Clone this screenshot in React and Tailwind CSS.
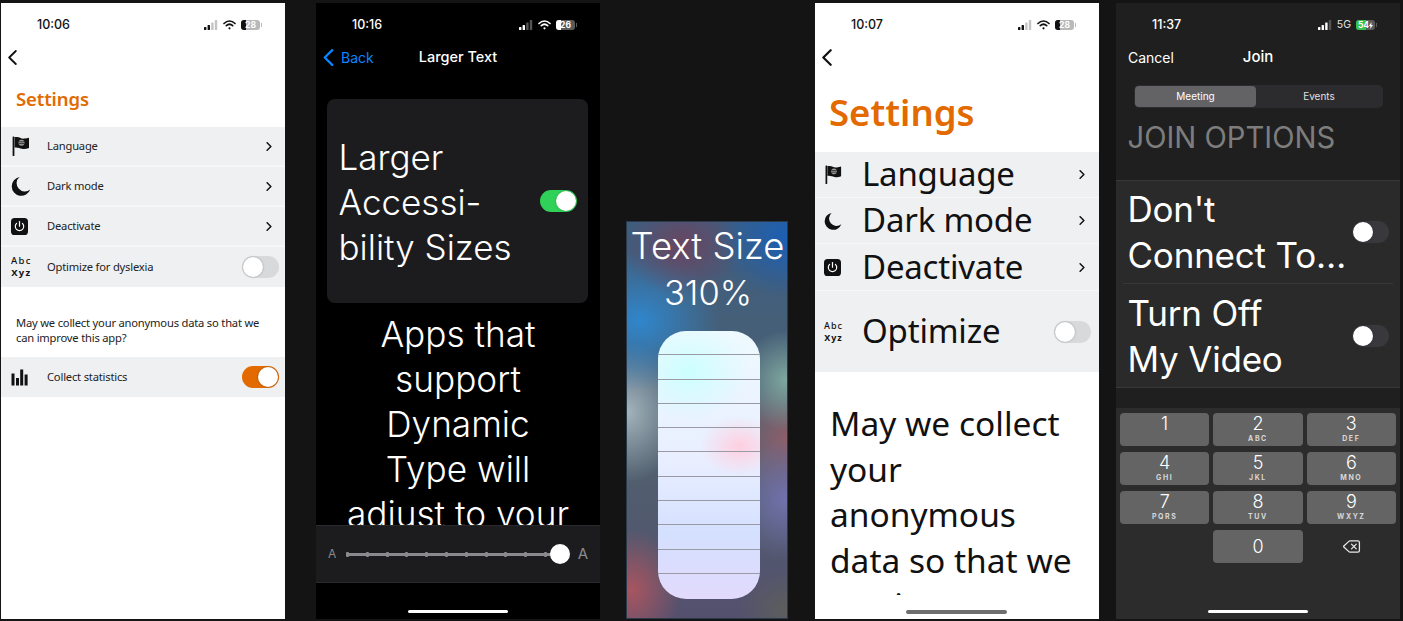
import React from 'react';
import { Delete } from 'lucide-react';

const UI = 'font-["Inter",sans-serif]';
const APP = 'font-["Noto_Sans",sans-serif]';

function StatusBar({ time, battery, dark, cellular }) {
  const on = dark ? '#ffffff' : '#111111';
  const off = dark ? '#555555' : '#c4c4c6';
  return (
    <div className={`h-[42px] shrink-0 flex items-center pl-[36px] pr-[23px] pt-[2px] ${UI} ${dark ? 'text-white' : 'text-[#111]'}`}>
      <span className="text-[12.5px] font-medium w-[40px]">{time}</span>
      <div className="ml-auto flex items-center">
        <svg width="14" height="10" viewBox="0 0 14 10">
          <rect x="0" y="7" width="2.4" height="3" rx="0.5" fill={on} />
          <rect x="3.6" y="5" width="2.4" height="5" rx="0.5" fill={on} />
          <rect x="7.2" y="2.5" width="2.4" height="7.5" rx="0.5" fill={cellular ? on : off} />
          <rect x="10.8" y="0" width="2.4" height="10" rx="0.5" fill={off} />
        </svg>
        {cellular ? (
          <span className="text-[10.5px] ml-[5px] mr-[5px] text-[#e4e4e4]">5G</span>
        ) : (
          <svg className="ml-[5px] mr-[5px]" width="13" height="10" viewBox="0 0 13 10" fill="none" stroke={on} strokeLinecap="round">
            <path d="M1 3.5C4.3.4 8.7.4 12 3.5" strokeWidth="1.7" />
            <path d="M3.3 5.7c2-1.8 4.4-1.8 6.4 0" strokeWidth="1.7" />
            <circle cx="6.5" cy="8.3" r="1.1" fill={on} stroke="none" />
          </svg>
        )}
        <Battery level={battery} dark={dark} cellular={cellular} />
      </div>
    </div>
  );
}

function Battery({ level, dark, cellular }) {
  const fill = cellular ? 'bg-[#32c24d]' : dark ? 'bg-white' : 'bg-[#111]';
  const w = cellular ? 'w-[54%]' : 'w-[28%]';
  return (
    <div className="flex items-center">
      <div className={`relative w-[19px] h-[10px] rounded-[3px] overflow-hidden ${dark ? 'bg-[#5a5a5a]' : 'bg-[#b9b9bb]'}`}>
        <div className={`h-full ${w} ${fill}`} />
        <span className="absolute inset-0 flex items-center justify-center text-[8.5px] leading-none font-bold text-white">
          {level}
          {cellular && (
            <svg width="4" height="7" viewBox="0 0 4 7" fill="#ffffff">
              <path d="M2.4 0L0 3.9h1.5L1.1 7 4 2.9H2.3z" />
            </svg>
          )}
        </span>
      </div>
      <div className={`w-[1px] h-[4px] ml-[1px] ${dark ? 'bg-[#5a5a5a]' : 'bg-[#b9b9bb]'}`} />
    </div>
  );
}

function Toggle({ on, track, className = '' }) {
  return (
    <div className={`w-[37px] h-[22px] rounded-full p-[1px] flex shrink-0 ${track} ${on ? 'justify-end' : 'justify-start'} ${className}`}>
      <div className="w-[20px] h-[20px] rounded-full bg-white shadow-[0_0_2px_rgba(0,0,0,0.35)]" />
    </div>
  );
}

function Chevron({ size = 6, height = 9, color = '#111', width = 2 }) {
  return (
    <svg width={size} height={height} viewBox="0 0 8 12" fill="none" stroke={color} strokeWidth={width} strokeLinecap="round" strokeLinejoin="round">
      <path d="M1.5 1L6.5 6L1.5 11" />
    </svg>
  );
}

function BackChevron({ color = '#111', w = 9, h = 15, sw = 1.8 }) {
  return (
    <svg width={w} height={h} viewBox="0 0 9 15" fill="none" stroke={color} strokeWidth={sw} strokeLinecap="round" strokeLinejoin="round">
      <path d="M7.8 1L1.2 7.5L7.8 14" />
    </svg>
  );
}

function FlagIcon({ size = 20 }) {
  return (
    <svg width={size} height={size} viewBox="0 0 20 20">
      <rect x="1.6" y="0.5" width="1.8" height="19.5" rx="0.6" fill="#111" />
      <path d="M1 1h5c3 0 4 2.2 7.5 1.6 1.7-.3 3.2-.6 4.5-.9v10.2c-2.4.9-4.6 1.3-7 .8-2.4-.5-4-1.5-7.4-1.2V1z" fill="#111" />
      <circle cx="10.5" cy="6.7" r="3" fill="#9c9c9c" />
      <path d="M7.6 5.8h5.8M7.6 7.6h5.8" stroke="#111" strokeWidth="0.7" />
    </svg>
  );
}

function MoonIcon({ size = 20 }) {
  return (
    <svg width={size} height={size} viewBox="0 0 20 20">
      <path d="M8.5 1A9.5 9.5 0 1 0 19.2 13.5A7.6 7.6 0 0 1 8.5 1z" fill="#111" />
    </svg>
  );
}

function PowerIcon({ size = 17 }) {
  return (
    <svg width={size} height={size} viewBox="0 0 17 17" fill="none">
      <rect width="17" height="17" rx="3.6" fill="#111" />
      <path d="M5.6 5.4a4.2 4.2 0 1 0 5.8 0" stroke="#fff" strokeWidth="1.2" strokeLinecap="round" />
      <path d="M8.5 3.6v4.6" stroke="#fff" strokeWidth="1.2" strokeLinecap="round" />
    </svg>
  );
}

function BarsIcon() {
  return (
    <svg width="17" height="17" viewBox="0 0 17 17" fill="#111">
      <rect x="0.5" y="4.5" width="3" height="12" />
      <rect x="5" y="9" width="3" height="7.5" />
      <rect x="9.2" y="0.5" width="3" height="16" />
      <rect x="13.6" y="5.5" width="3" height="11" />
    </svg>
  );
}

function AbcIcon({ small }) {
  return (
    <div className={`${APP} text-[#111] text-center leading-[12px] ${small ? 'text-[9px] tracking-[1px]' : 'text-[9.5px] tracking-[1.3px]'}`}>
      <div className="font-medium">Abc</div>
      <div className="font-bold">Xyz</div>
    </div>
  );
}

const smallRows = [
  { label: 'Language', icon: <FlagIcon /> },
  { label: 'Dark mode', icon: <MoonIcon /> },
  { label: 'Deactivate', icon: <PowerIcon /> },
];

function SmallRow({ icon, label, right, h = 'h-[38px]' }) {
  return (
    <div className={`${h} bg-[#eff0f2] flex items-center pr-[6px]`}>
      <div className="w-[46px] pl-[10px] flex items-center">{icon}</div>
      <span className="text-[11.2px] tracking-[-0.2px] text-[#222]">{label}</span>
      <div className="ml-auto flex items-center">{right}</div>
    </div>
  );
}

function PhoneOne() {
  return (
    <div className={`w-[284px] ml-[1px] bg-white shrink-0 flex flex-col overflow-hidden ${APP}`}>
      <StatusBar time="10:06" battery="28" />
      <div className="h-[24px] pl-[7px] flex items-center shrink-0">
        <BackChevron />
      </div>
      <div className="mt-[17px] mb-[15px] h-[26px] pl-[15px] text-[18.5px] tracking-[-0.1px] leading-[26px] font-semibold text-[#e26a00]">Settings</div>
      <div className="flex flex-col gap-[2px] bg-[#f7f7f8]">
        {smallRows.map((r) => (
          <SmallRow key={r.label} icon={r.icon} label={r.label} right={<div className="pr-[7px] flex"><Chevron /></div>} />
        ))}
        <SmallRow h="h-[40px]" icon={<AbcIcon />} label="Optimize for dyslexia" right={<Toggle track="bg-[#d8d9db]" />} />
      </div>
      <p className="mt-[29px] px-[15px] text-[11.2px] tracking-[-0.2px] leading-[14.5px] text-[#222]">
        May we collect your anonymous data so that we can improve this app?
      </p>
      <div className="mt-[12px]">
        <SmallRow h="h-[40px]" icon={<BarsIcon />} label="Collect statistics" right={<Toggle on track="bg-[#e26a00]" />} />
      </div>
    </div>
  );
}

function SliderBar() {
  const ticks = Array.from({ length: 11 }, (_, i) => i);
  return (
    <div className="absolute left-0 right-0 top-[522px] h-[58px] bg-[#1c1c1e] border-y border-[#2a2a2c] flex items-center pl-[12px] pr-[12px]">
      <span className="text-[12px] text-[#8a8a8e] w-[18px]">A</span>
      <div className="relative flex-1 h-[20px] flex items-center">
        <div className="w-full h-[3px] bg-[#8a8a8e] flex items-center">
          <div className="w-[201px] flex justify-between items-center">
            {ticks.map((t) => (
              <div key={t} className="w-[3px] h-[5px] rounded-[1px] bg-[#8a8a8e]" />
            ))}
          </div>
        </div>
        <div className="absolute right-[-10px] top-0 w-[20px] h-[20px] rounded-full bg-white" />
      </div>
      <span className="text-[15px] text-[#8a8a8e] ml-[18px]">A</span>
    </div>
  );
}

function PhoneTwo() {
  return (
    <div className={`relative w-[284px] ml-[31px] bg-black shrink-0 flex flex-col overflow-hidden text-white ${UI}`}>
      <StatusBar time="10:16" battery="26" dark />
      <div className="relative h-[24px] flex items-center justify-center shrink-0">
        <div className="absolute left-[7px] flex items-center gap-[7px] text-[#0a84ff] text-[14px]">
          <BackChevron color="#0a84ff" w={11} h={17} sw={2} />
          <span>Back</span>
        </div>
        <span className="text-[14.5px] font-medium">Larger Text</span>
      </div>
      <div className="ml-[11px] mr-[12px] mt-[30px] h-[204px] shrink-0 bg-[#1c1c1e] rounded-[8px] flex items-center pl-[11.5px] pr-[11px]">
        <div className="text-[35px] leading-[45px] font-light flex-1 pt-[2px]">
          Larger<br />Accessi-<br />bility Sizes
        </div>
        <Toggle on track="bg-[#30d158]" />
      </div>
      <div className="mt-[9px] text-center text-[35.2px] leading-[45px] font-light">
        Apps that<br />support<br />Dynamic<br />Type will<br />adjust to your
      </div>
      <SliderBar />
      <div className="absolute bottom-[6px] left-[92px] w-[100px] h-[3px] rounded-full bg-white" />
    </div>
  );
}

function TextSizePanel() {
  const segments = Array.from({ length: 11 }, (_, i) => i);
  return (
    <div className={`w-[162px] ml-[26px] mt-[218px] shrink-0 flex flex-col items-center border border-[#2b3a4a] text-white ${UI} bg-[radial-gradient(ellipse_70px_60px_at_100%_4%,#1b5fb4_0%,transparent_100%),radial-gradient(ellipse_60px_50px_at_35%_6%,#6a4560_0%,transparent_100%),radial-gradient(ellipse_80px_70px_at_8%_25%,#2f86cc_0%,transparent_100%),radial-gradient(ellipse_60px_70px_at_0%_48%,#a4b4bc_0%,transparent_100%),radial-gradient(ellipse_50px_50px_at_100%_40%,#7fa8a0_0%,transparent_100%),radial-gradient(ellipse_60px_60px_at_100%_70%,#7272ad_0%,transparent_100%),radial-gradient(ellipse_60px_60px_at_100%_55%,#8d5f6a_0%,transparent_100%),radial-gradient(ellipse_50px_60px_at_3%_93%,#a85560_0%,transparent_100%),radial-gradient(ellipse_50px_40px_at_100%_98%,#5c5f5c_0%,transparent_100%),linear-gradient(#3d5e80,#50606e_60%,#54506e)]`}>
      <div className="text-[36.5px] leading-[44px] font-[350] whitespace-nowrap mt-[2px] ml-[1px]">Text Size</div>
      <div className="text-[34.5px] leading-[38px] font-light mt-[6px] ml-[2px]">310%</div>
      <div className="mt-[19px] ml-[4px] w-[102px] h-[268px] rounded-[28px] overflow-hidden flex flex-col bg-[radial-gradient(ellipse_40px_30px_at_80%_43%,#ffcfe0_0%,transparent_100%),radial-gradient(ellipse_60px_50px_at_30%_15%,#ccffff_0%,transparent_100%),linear-gradient(#eefaff,#e8eeff_50%,#d4e0ff_75%,#e2dafc)]">
        {segments.map((s) => (
          <div key={s} className={`${s === 10 ? 'h-[25px]' : 'h-[24.3px]'} shrink-0 border-b border-[#9a9aa4] last:border-b-0`} />
        ))}
      </div>
    </div>
  );
}

function BigRow({ icon, label, right, h = 'h-[45px]' }) {
  return (
    <div className={`${h} bg-[#eff0f2] flex items-center pr-[8px]`}>
      <div className="w-[47px] pl-[9px] flex items-center">{icon}</div>
      <span className="text-[33px] tracking-[-0.2px] leading-none pb-[2px] text-[#111]">{label}</span>
      <div className="ml-auto flex items-center">{right}</div>
    </div>
  );
}

function PhoneFour() {
  return (
    <div className={`relative w-[284px] ml-[27px] bg-white shrink-0 flex flex-col overflow-hidden ${APP}`}>
      <StatusBar time="10:07" battery="28" />
      <div className="h-[24px] pl-[7px] flex items-center shrink-0">
        <BackChevron w={10} h={17} sw={2} />
      </div>
      <div className="mt-[21px] mb-[18px] h-[44px] pl-[14px] text-[36.5px] leading-[44px] font-semibold text-[#e26a00]">Settings</div>
      <div className="flex flex-col gap-[1px] bg-[#f7f7f8]">
        <BigRow icon={<FlagIcon size={19} />} label="Language" right={<div className="pr-[6px] flex"><Chevron /></div>} />
        <BigRow icon={<MoonIcon size={18} />} label="Dark mode" right={<div className="pr-[6px] flex"><Chevron /></div>} />
        <BigRow h="h-[46px]" icon={<PowerIcon />} label="Deactivate" right={<div className="pr-[6px] flex"><Chevron /></div>} />
        <BigRow h="h-[81px]" icon={<AbcIcon small />} label="Optimize" right={<Toggle track="bg-[#d8d9db]" />} />
      </div>
      <p className="mt-[29px] px-[15px] text-[33.5px] leading-[45.5px] text-[#111]">
        May we collect your anonymous data so that we can improve this app?
      </p>
      <div className="absolute left-0 right-0 bottom-0 h-[24px] bg-white">
        <div className="absolute bottom-[5px] left-[91px] w-[101px] h-[4px] rounded-full bg-[#6e6e6e]" />
      </div>
    </div>
  );
}

const keys = [
  ['1', ''], ['2', 'ABC'], ['3', 'DEF'],
  ['4', 'GHI'], ['5', 'JKL'], ['6', 'MNO'],
  ['7', 'PQRS'], ['8', 'TUV'], ['9', 'WXYZ'],
];

function Key({ digit, letters }) {
  return (
    <div className="h-[33px] bg-[#646464] rounded-[4px] flex flex-col items-center text-white">
      <span className="text-[18px] leading-[20px] font-light mt-[1px]">{digit}</span>
      <span className="text-[7px] leading-[9px] font-bold tracking-[1.6px] text-[#d8d8d8]">{letters}</span>
    </div>
  );
}

function JoinRow({ lines, rowH }) {
  return (
    <div className={`${rowH} shrink-0 flex items-center pl-[11.5px] pr-[11px]`}>
      <div className="text-[35px] tracking-[-0.2px] leading-[46px] font-normal flex-1 whitespace-nowrap">
        {lines[0]}<br />{lines[1]}
      </div>
      <Toggle track="bg-[#39393d]" />
    </div>
  );
}

function PhoneFive() {
  return (
    <div className={`relative w-[284px] ml-[17px] bg-[#1f1f1f] shrink-0 flex flex-col overflow-hidden text-white ${UI}`}>
      <StatusBar time="11:37" battery="54" dark cellular />
      <div className="relative h-[24px] flex items-center justify-center shrink-0 text-[15px]">
        <span className="absolute left-[12px] text-[14px]">Cancel</span>
        <span className="font-medium">Join</span>
      </div>
      <div className="mt-[16px] ml-[18px] mr-[17px] h-[23px] shrink-0 bg-[#2c2c2e] rounded-[5px] flex text-[10px] p-[1px]">
        <div className="w-[121px] bg-[#636366] rounded-[4px] flex items-center justify-center">Meeting</div>
        <div className="flex-1 flex items-center justify-center text-[#e0e0e0]">Events</div>
      </div>
      <div className="mt-[11px] h-[38px] shrink-0 pl-[11.5px] text-[29.2px] leading-[38px] text-[#7d7d7d]">JOIN OPTIONS</div>
      <div className="mt-[23px] bg-[#2a2a2a] border-y border-[#383838]">
        <JoinRow rowH="h-[102px]" lines={["Don't", 'Connect To…']} />
        <div className="h-[1px] ml-[7px] mr-[7px] bg-[#383838]" />
        <JoinRow rowH="h-[103px]" lines={['Turn Off', 'My Video']} />
      </div>
      <div className="mt-[20px] flex-1 bg-[#2c2c2c] px-[4px] pt-[5px]">
        <div className="grid grid-cols-3 gap-x-[4px] gap-y-[6px]">
          {keys.map(([d, l]) => (
            <Key key={d} digit={d} letters={l} />
          ))}
          <div />
          <div className="h-[33px] bg-[#646464] rounded-[4px] flex items-center justify-center text-[18px] font-light">0</div>
          <div className="flex items-center justify-center">
            <Delete size={19} strokeWidth={1.6} color="#e8e8e8" />
          </div>
        </div>
      </div>
      <div className="absolute bottom-[6px] left-[92px] w-[100px] h-[3px] rounded-full bg-white" />
    </div>
  );
}

export default function App() {
  return (
    <div className="w-[1403px] h-[621px] bg-[#141414] pt-[3px] pb-[2px] flex overflow-hidden">
      <PhoneOne />
      <PhoneTwo />
      <TextSizePanel />
      <PhoneFour />
      <PhoneFive />
    </div>
  );
}
